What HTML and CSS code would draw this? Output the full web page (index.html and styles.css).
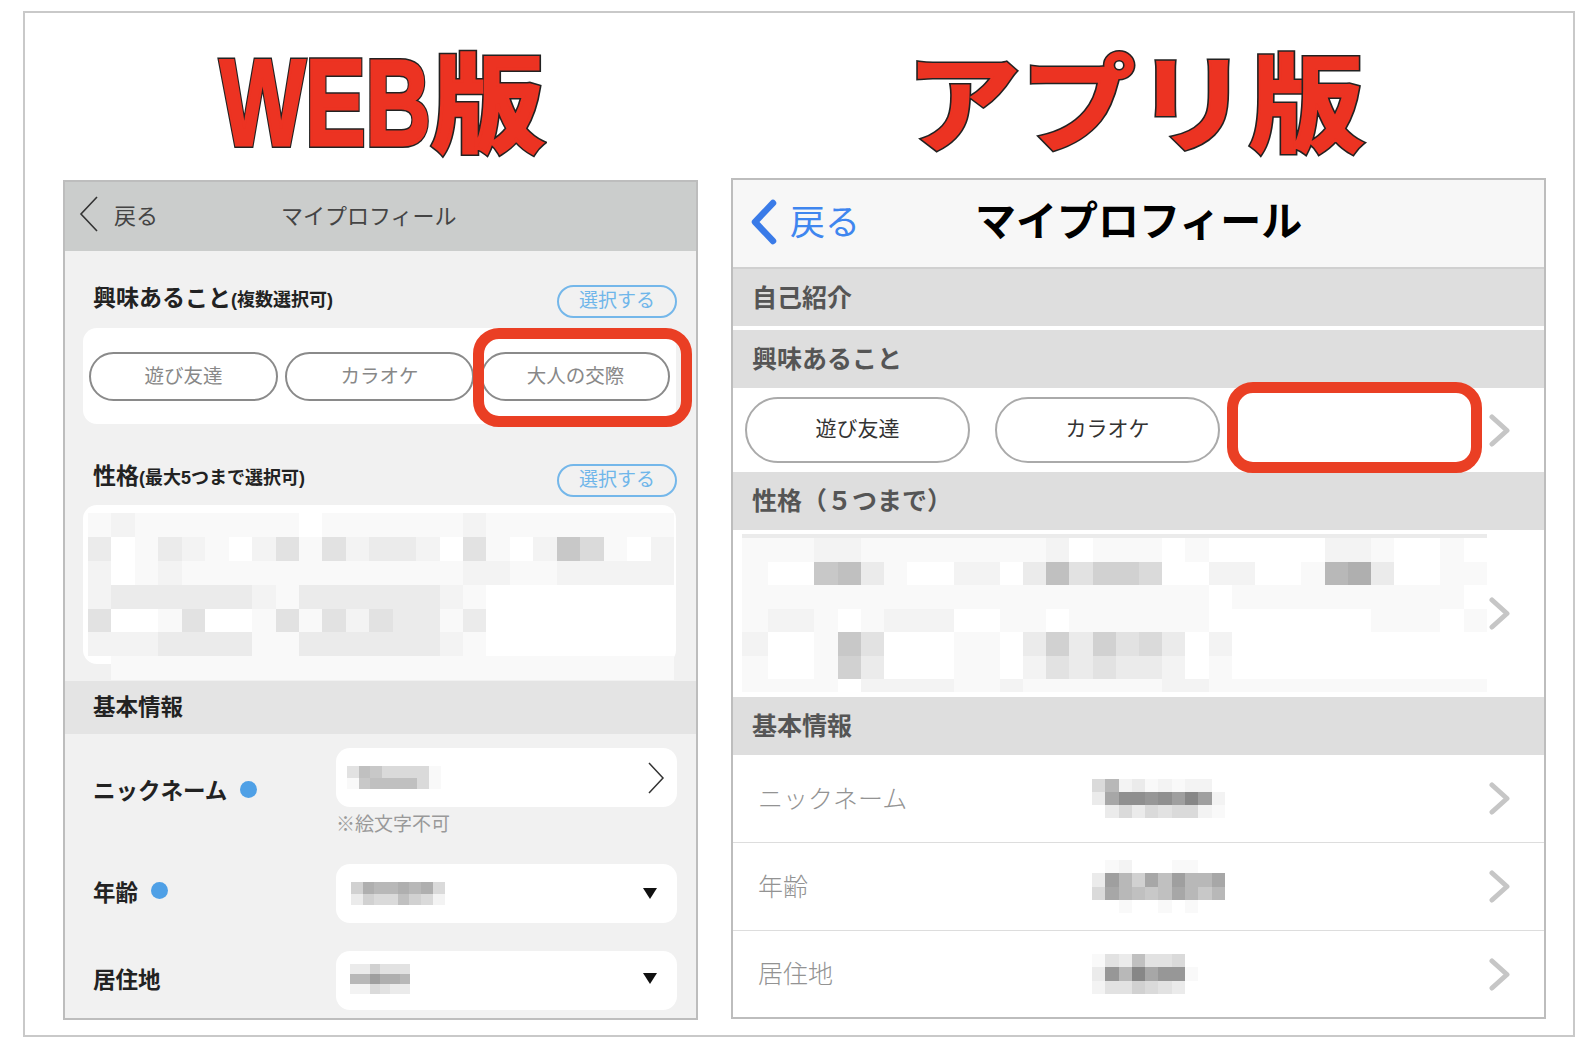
FILE: index.html
```html
<!DOCTYPE html>
<html lang="ja">
<head>
    <meta charset="utf-8">
    <title>WEB版 アプリ版</title>
    <link rel="stylesheet" href="styles.css">
</head>
<body>
    <div class="frame">

        <!-- WEB -->
        <div class="col col-web">
            <h1 class="title title-web"><span class="title-text latin" data-text="WEB">WEB</span><span class="title-text kanji" data-text="版">版</span></h1>
            <div class="panel web">
                <div class="web-header">
                    <svg class="web-back" width="20" height="36" viewBox="0 0 20 36"><polyline points="18,1 2,18 18,35"/></svg>
                    <span class="web-back-label">戻る</span>
                    <span class="web-title">マイプロフィール</span>
                </div>

                <div class="web-head first">
                    <div class="web-heading">興味あること<small>(複数選択可)</small></div>
                    <div class="select-btn">選択する</div>
                </div>
                <div class="web-card tags">
                    <div class="pill">遊び友達</div>
                    <div class="pill">カラオケ</div>
                    <div class="pill">大人の交際</div>
                    <div class="red-box web-red"></div>
                </div>

                <div class="web-head">
                    <div class="web-heading">性格<small>(最大5つまで選択可)</small></div>
                    <div class="select-btn">選択する</div>
                </div>
                <div class="web-card traits">
                    <div class="mosaic m-web" data-rows="edeeeeeeefeeeeeedeeeeeeee cfecdefdbebdccdfbefd8aefd dfedeeeeeeeeeeeeddeeddddd dccccccdeccccccdeffffffff bffebffebebdbccecffffffff dddcccceeccccccdeffffffff -eeeeeeeeeeeeeeeeeeeeeeee"></div>
                </div>

                <div class="web-band">基本情報</div>

                <div class="web-form">
                    <div class="web-row">
                        <div class="web-label"><span>ニックネーム</span><i class="dot"></i></div>
                        <div class="web-field">
                            <div class="web-input pad-nick">
                                <div class="mosaic m-web-small" data-rows="b78aaaae e87777ae"></div>
                                <svg class="web-next" width="17" height="32" viewBox="0 0 17 32"><polyline points="1,1 15,16 1,31"/></svg>
                            </div>
                            <div class="web-note">※絵文字不可</div>
                        </div>
                    </div>
                    <div class="web-row">
                        <div class="web-label"><span>年齢</span><i class="dot"></i></div>
                        <div class="web-field">
                            <div class="web-input pad-age">
                                <div class="mosaic m-web-small" data-rows="9566565a c9aa79ad"></div>
                                <i class="caret"></i>
                            </div>
                        </div>
                    </div>
                    <div class="web-row">
                        <div class="web-label"><span>居住地</span></div>
                        <div class="web-field">
                            <div class="web-input pad-live">
                                <div class="mosaic m-web-tiny" data-rows="cc9bbb 663556 ddabcc"></div>
                                <i class="caret"></i>
                            </div>
                        </div>
                    </div>
                </div>
            </div>
        </div>

        <!-- アプリ -->
        <div class="col col-app">
            <h1 class="title title-app"><span class="title-text kana" data-text="アプリ版">アプリ版</span></h1>
            <div class="panel app">
                <div class="app-header">
                    <svg class="app-back" width="28" height="46" viewBox="0 0 28 46"><polyline points="24,4 6,23 24,42"/></svg>
                    <span class="app-back-label">戻る</span>
                    <span class="app-title">マイプロフィール</span>
                </div>

                <div class="app-band short">自己紹介</div>
                <div class="app-band gap">興味あること</div>
                <div class="app-tags">
                    <div class="app-pill">遊び友達</div>
                    <div class="app-pill">カラオケ</div>
                    <svg class="app-next" width="21" height="33" viewBox="0 0 21 33"><polyline points="3,3 18,16.5 3,30"/></svg>
                    <div class="red-box app-red"></div>
                </div>

                <div class="app-band">性格（５つまで）</div>
                <div class="app-traits">
                    <div class="mosaic m-app" data-rows="cccccccccccccccccccccccccccccccc eeeddeeeeeeeedfeeefefffffddeffef eff87ceffddfc7b99affddffe65cffee eeeeeeeeeeeeeeeeeeeefeeeeeeeeeef eddefedddffeefeeeeeefffffffeeefe dffe8bfffeefc9c9bacfdfffffffffff effe9cfffeefdbcbccdfefffffffffff eeeefddddeedeeeeeeddeeeeeeeeeeee"></div>
                    <svg class="app-next" width="21" height="33" viewBox="0 0 21 33"><polyline points="3,3 18,16.5 3,30"/></svg>
                </div>

                <div class="app-band">基本情報</div>
                <div class="app-row">
                    <div class="app-label">ニックネーム</div>
                    <div class="mosaic m-app-small" data-rows="a6dcededdf c41121303d fcacabaade"></div>
                    <svg class="app-next" width="21" height="33" viewBox="0 0 21 33"><polyline points="3,3 18,16.5 3,30"/></svg>
                </div>
                <div class="app-row">
                    <div class="app-label">年齢</div>
                    <div class="mosaic m-app-small" data-rows="fedfffeeff c369473664 a467874686 ffeffefeff"></div>
                    <svg class="app-next" width="21" height="33" viewBox="0 0 21 33"><polyline points="3,3 18,16.5 3,30"/></svg>
                </div>
                <div class="app-row">
                    <div class="app-label">居住地</div>
                    <div class="mosaic m-app-small" data-rows="ebc7bbafff c260422eff dbb9abcfff"></div>
                    <svg class="app-next" width="21" height="33" viewBox="0 0 21 33"><polyline points="3,3 18,16.5 3,30"/></svg>
                </div>
            </div>
        </div>

    </div>
    <script src="mosaic.js"></script>
</body>
</html>
```

FILE: styles.css
```css
* {
    box-sizing: border-box;
}
body {
    margin: 0;
    background: #fff;
    font-family: "Liberation Sans", "Noto Sans CJK JP", sans-serif;
    color: #222;
}
.frame {
    display: flex;
    width: 1552px;
    height: 1026px;
    margin: 11px 0 0 23px;
    padding-left: 38px;
    border: 2px solid #c9c9c9;
}
.col {
    display: flex;
    flex-direction: column;
}
.col-web {
    width: 668px;
}
.col-app {
    width: 815px;
}

/* big red titles */
.title {
    display: flex;
    justify-content: center;
    align-items: flex-start;
    margin: 0;
    font-weight: 700;
    line-height: 1;
    color: #ec3322;
}
.title-web {
    width: 635px;
    height: 167px;
    padding-top: 29px;
    font-size: 122px;
}
.title-app {
    height: 165px;
    padding: 40px 8px 0 0;
    font-size: 106px;
}
.title-text {
    position: relative;
    z-index: 0;
    display: block;
    -webkit-text-stroke: 3px #ec3322;
}
.title-text::before {
    content: attr(data-text);
    position: absolute;
    left: 0;
    top: 0;
    z-index: -1;
    -webkit-text-stroke: 6px #222;
}
.latin {
    margin: 0 -37px;
    transform: scaleX(0.74);
}
.kanji {
    margin: 11px 0 0 4px;
    font-size: 106px;
    transform: scaleX(1.06);
}
.kana {
    -webkit-text-stroke-width: 2px;
    transform: scaleX(1.08);
}
.kana::before {
    -webkit-text-stroke-width: 5px;
}

.panel {
    position: relative;
    border: 2px solid #bdbdbd;
}
.mosaic {
    display: grid;
    filter: blur(0.4px);
}

/* WEB panel */
.web {
    width: 635px;
    height: 840px;
    background: #f1f1f1;
}
.web-header {
    display: flex;
    align-items: center;
    height: 69px;
    padding: 0 0 6px 14px;
    background: #cbcdcc;
    color: #444;
    font-size: 22px;
}
.web-back polyline {
    fill: none;
    stroke: #333;
    stroke-width: 1.6;
}
.web-back-label {
    margin-left: 15px;
    width: 167px;
}
.web-head {
    display: flex;
    justify-content: space-between;
    align-items: flex-start;
    height: 81px;
    padding: 40px 19px 0 28px;
}
.web-head.first {
    height: 77px;
    padding-top: 34px;
}
.web-heading {
    margin-top: -1px;
    font-size: 23px;
    font-weight: 700;
    line-height: 26px;
    color: #222;
}
.first .web-heading {
    margin-top: 0;
}
.web-heading small {
    font-size: 18px;
}
.select-btn {
    width: 120px;
    height: 33px;
    border: 2px solid #74b7ea;
    border-radius: 17px;
    color: #6fb6ea;
    font-size: 19px;
    line-height: 28px;
    text-align: center;
}
.web-card {
    position: relative;
    margin: 0 20px 0 18px;
    background: #fff;
    border-radius: 14px;
}
.tags {
    display: flex;
    gap: 7px;
    align-items: center;
    height: 96px;
    padding-left: 6px;
}
.pill {
    width: 189px;
    height: 49px;
    border: 2px solid #8a8a8a;
    border-radius: 25px;
    color: #888;
    font-size: 19.5px;
    line-height: 44px;
    text-align: center;
}
.red-box {
    position: absolute;
    border: 11px solid #ea3f24;
    border-radius: 26px;
}
.web-red {
    left: 390px;
    top: 0;
    width: 219px;
    height: 99px;
}
.traits {
    height: 159px;
    padding: 8px 0 0 5px;
}
.m-web {
    grid-template-columns: repeat(25, 23.44px);
    grid-auto-rows: 23.9px;
}
.web-band {
    height: 53px;
    margin-top: 17px;
    padding-left: 28px;
    background: #e4e4e4;
    font-size: 22.5px;
    font-weight: 700;
    line-height: 54px;
}
.web-form {
    display: flex;
    flex-direction: column;
    gap: 28px;
    padding-top: 14px;
}
.web-row {
    display: flex;
    align-items: center;
    padding-left: 28px;
}
.web-label {
    display: flex;
    align-items: center;
    width: 243px;
    font-size: 22.5px;
    font-weight: 700;
}
.web-label span {
    padding-bottom: 6px;
}
.dot {
    width: 17px;
    height: 17px;
    margin: -6px 0 0 13px;
    border-radius: 50%;
    background: #4fa0e6;
}
.web-field {
    width: 341px;
}
.web-input {
    display: flex;
    justify-content: space-between;
    align-items: center;
    height: 59px;
    padding-right: 20px;
    background: #fff;
    border-radius: 14px;
}
.pad-nick {
    padding-left: 11px;
    padding-right: 4px;
}
.pad-age {
    padding-left: 15px;
}
.pad-live {
    padding: 0 20px 4px 14px;
}
.m-web-small {
    grid-template-columns: repeat(8, 11.7px);
    grid-auto-rows: 11.5px;
}
.m-web-tiny {
    grid-template-columns: repeat(6, 10px);
    grid-auto-rows: 10px;
}
.web-next {
    margin-right: 8px;
}
.web-next polyline {
    fill: none;
    stroke: #333;
    stroke-width: 1.5;
}
.caret {
    border-top: 11px solid #111;
    border-left: 7px solid transparent;
    border-right: 7px solid transparent;
}
.web-note {
    margin-top: 7px;
    color: #999;
    font-size: 19px;
    line-height: 22px;
}

/* app panel */
.app {
    width: 815px;
    height: 841px;
    background: #fff;
}
.app-header {
    display: flex;
    align-items: center;
    height: 89px;
    padding: 0 0 8px 16px;
    background: #f7f7f7;
    border-bottom: 2px solid #d0d0d0;
}
.app-back {
    margin-top: 4px;
}
.app-back polyline {
    fill: none;
    stroke: #3a7be8;
    stroke-width: 6.5;
    stroke-linecap: round;
    stroke-linejoin: round;
}
.app-back-label {
    width: 185px;
    margin-left: 13px;
    color: #3f86ef;
    font-size: 35px;
}
.app-title {
    margin-top: -4px;
    color: #000;
    font-size: 41px;
    font-weight: 700;
}
.app-band {
    height: 58px;
    padding-left: 19px;
    background: #dedede;
    color: #555;
    font-size: 25px;
    font-weight: 700;
    line-height: 59px;
}
.app-band.short {
    height: 57px;
}
.app-band.gap {
    margin-top: 4px;
}
.app-tags {
    position: relative;
    display: flex;
    align-items: center;
    gap: 25px;
    height: 84px;
    padding-left: 12px;
}
.app-pill {
    width: 225px;
    height: 66px;
    border: 2px solid #aaa;
    border-radius: 33px;
    color: #333;
    font-size: 21px;
    line-height: 60px;
    text-align: center;
}
.app-next {
    margin-left: auto;
    margin-right: 34px;
}
.app-next polyline {
    fill: none;
    stroke: #c6c6c6;
    stroke-width: 5;
    stroke-linecap: round;
    stroke-linejoin: round;
}
.app-red {
    left: 494px;
    top: -6px;
    width: 255px;
    height: 91px;
}
.app-traits {
    display: flex;
    align-items: center;
    height: 167px;
}
.m-app {
    align-self: flex-start;
    margin: 4px 0 0 9px;
    grid-template-columns: 26px repeat(31, 23.2px);
    grid-template-rows: 4px repeat(6, 23.5px) 13px;
}
.app-row {
    display: flex;
    align-items: center;
    height: 88px;
    padding-left: 25px;
    border-bottom: 1px solid #ddd;
}
.app-row:last-child {
    height: 86px;
    border-bottom: 0;
}
.app-label {
    width: 334px;
    padding-bottom: 4px;
    color: #939393;
    font-size: 25px;
    font-weight: 300;
}
.m-app-small {
    grid-template-columns: repeat(10, 13.3px);
    grid-auto-rows: 13.3px;
}
```

FILE: mosaic.js
```js
// draws the blurred-out blocks. each char in data-rows is one tile, f = white, 0 = darkest
var shades = [135, 143, 151, 159, 167, 175, 184, 192, 200, 209, 218, 226, 235, 243, 249, 255];
var boxes = document.querySelectorAll('.mosaic');
for (var i = 0; i < boxes.length; i++) {
    var rows = boxes[i].getAttribute('data-rows').split(' ');
    for (var r = 0; r < rows.length; r++) {
        for (var c = 0; c < rows[r].length; c++) {
            var tile = document.createElement('span');
            var ch = rows[r][c];
            if (ch !== '-') {
                var g = shades[parseInt(ch, 16)];
                tile.style.background = 'rgb(' + g + ',' + g + ',' + g + ')';
            }
            boxes[i].appendChild(tile);
        }
    }
}
```
